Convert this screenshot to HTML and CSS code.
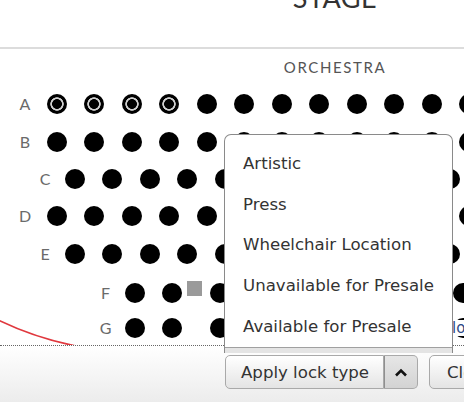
FILE: index.html
```html
<!DOCTYPE html>
<html>
<head>
<meta charset="utf-8">
<link rel="stylesheet" href="styles.css">
</head>
<body>
<div class="page">
  <div class="stage"><div class="stage-title">STAGE</div></div>
  <div class="map">
    <div class="section-title">ORCHESTRA</div>
    <div class="row row-wide">
      <span class="lbl">A</span>
      <div class="seats">
        <i class="seat ring"></i><i class="seat ring"></i><i class="seat ring"></i><i class="seat ring"></i>
        <i class="seat"></i><i class="seat"></i><i class="seat"></i><i class="seat"></i>
        <i class="seat"></i><i class="seat"></i><i class="seat"></i><i class="seat"></i>
      </div>
    </div>
    <div class="row row-wide">
      <span class="lbl">B</span>
      <div class="seats">
        <i class="seat"></i><i class="seat"></i><i class="seat"></i><i class="seat"></i>
        <i class="seat"></i><i class="seat"></i><i class="seat"></i><i class="seat"></i>
        <i class="seat"></i><i class="seat"></i><i class="seat"></i><i class="seat"></i>
      </div>
    </div>
    <div class="row row-mid">
      <span class="lbl">C</span>
      <div class="seats">
        <i class="seat"></i><i class="seat"></i><i class="seat"></i><i class="seat"></i>
        <i class="seat"></i><i class="seat"></i><i class="seat"></i><i class="seat"></i>
        <i class="seat"></i><i class="seat"></i><i class="seat"></i>
      </div>
    </div>
    <div class="row row-wide">
      <span class="lbl">D</span>
      <div class="seats">
        <i class="seat"></i><i class="seat"></i><i class="seat"></i><i class="seat"></i>
        <i class="seat"></i><i class="seat"></i><i class="seat"></i><i class="seat"></i>
        <i class="seat"></i><i class="seat"></i><i class="seat"></i><i class="seat"></i>
      </div>
    </div>
    <div class="row row-mid">
      <span class="lbl">E</span>
      <div class="seats">
        <i class="seat"></i><i class="seat"></i><i class="seat"></i><i class="seat"></i>
        <i class="seat"></i><i class="seat"></i><i class="seat"></i><i class="seat"></i>
        <i class="seat"></i><i class="seat"></i><i class="seat"></i>
      </div>
    </div>
    <div class="row row-narrow row-f">
      <span class="lbl">F</span>
      <div class="seats seats-free">
        <i class="seat"></i><i class="seat gap-17"></i><i class="square gap-5"></i><i class="seat gap-8"></i><i class="seat gap-far"></i>
      </div>
    </div>
    <div class="row row-narrow row-g">
      <span class="lbl">G</span>
      <div class="seats seats-free">
        <i class="seat"></i><i class="seat gap-17"></i><i class="seat gap-28"></i><i class="seat gap-far tagged"><span class="tag">lo</span></i>
      </div>
    </div>
    <svg class="curve" width="100" height="40" viewBox="0 0 100 40">
      <path d="M-2 14 Q35 32 76 40" fill="none" stroke="#e0383e" stroke-width="1.6"/>
    </svg>
  </div>
  <div class="toolbar">
    <div class="split">
      <button class="btn btn-main">Apply lock type</button>
      <button class="btn btn-arrow">
        <svg width="14" height="9" viewBox="0 0 14 9"><polyline points="2,7.5 7,2.5 12,7.5" fill="none" stroke="#111" stroke-width="2.6"/></svg>
      </button>
    </div>
    <button class="btn btn-clear">Clear</button>
  </div>
  <div class="menu">
    <ul class="menu-list">
      <li>Artistic</li>
      <li>Press</li>
      <li>Wheelchair Location</li>
      <li>Unavailable for Presale</li>
      <li>Available for Presale</li>
    </ul>
    <div class="menu-foot"></div>
  </div>
</div>
</body>
</html>
```

FILE: styles.css
```css
html, body {
  margin: 0;
  padding: 0;
  background: #fff;
  overflow: hidden;
}

.page {
  position: relative;
  width: 464px;
  height: 402px;
  overflow: hidden;
  font-family: "DejaVu Sans", Verdana, sans-serif;
}

.stage {
  display: flow-root;
  width: 670px;
  height: 47px;
  border-bottom: 2px solid #dcdcdc;
  text-align: center;
}

.stage-title {
  font-family: Lato, "Liberation Sans", sans-serif;
  font-size: 27px;
  line-height: 27px;
  margin-top: -16px;
  letter-spacing: 0.5px;
  color: #333;
}

.map {
  position: relative;
  width: 670px;
  height: 296px;
  border-bottom: 1px dotted #666;
  overflow: hidden;
}

.section-title {
  height: 36.8px;
  line-height: 36px;
  text-align: center;
  font-family: Lato, "Liberation Sans", sans-serif;
  font-size: 15px;
  letter-spacing: 1.6px;
  color: #555;
}

.row {
  display: flex;
  align-items: center;
  height: 37.3px;
}

.lbl {
  width: 20px;
  text-align: center;
  font-family: Lato, "Liberation Sans", sans-serif;
  font-size: 16px;
  line-height: 1;
  color: #6a6a6a;
}

.row-wide { padding-left: 15px; }
.row-wide .lbl { margin-right: 11.7px; }
.row-mid { padding-left: 35px; }
.row-mid .lbl { margin-right: 9.5px; }
.row-narrow { padding-left: 95.5px; }
.row-narrow .lbl { margin-right: 9.5px; }

.row-f {
  margin-top: 2px;
  margin-bottom: -2px;
}

.seats {
  display: flex;
  align-items: center;
  gap: 17.5px;
}

.seats-free { gap: 0; }

.seat {
  flex: none;
  width: 20px;
  height: 20px;
  border-radius: 50%;
  background: #000;
}

.seat.ring {
  background: radial-gradient(circle at center, #000 0 4.6px, #d0d0d0 5.2px 6.4px, #000 7px);
}

.square {
  flex: none;
  width: 15px;
  height: 15px;
  background: #9a9a9a;
  margin-bottom: 9px;
}

.gap-17 { margin-left: 17px; }
.gap-5 { margin-left: 5px; }
.gap-8 { margin-left: 8px; }
.gap-28 { margin-left: 28px; }
.gap-far { margin-left: 223px; }

.tagged { position: relative; }
.tag {
  position: absolute;
  left: -1px;
  top: 2px;
  font-size: 15px;
  font-style: normal;
  color: #2d4a86;
  background: #fff;
  line-height: 16px;
}

.curve {
  position: absolute;
  left: 0;
  bottom: -1px;
}

.toolbar {
  height: 56px;
  box-sizing: border-box;
  padding: 9px 0 0 225px;
  display: flex;
  align-items: flex-start;
  gap: 11px;
  background: linear-gradient(#ffffff, #ececec);
}

.split { display: flex; }

.btn {
  height: 34px;
  box-sizing: border-box;
  margin: 0;
  border: 1px solid #a9a9a9;
  font-family: "DejaVu Sans", Verdana, sans-serif;
  font-size: 16.6px;
  color: #333;
  background: linear-gradient(#ffffff, #e4e4e4);
  display: flex;
  align-items: center;
  flex: none;
}

.btn-main {
  width: 159px;
  padding: 0 0 0 15px;
  border-radius: 5px 0 0 5px;
}

.btn-arrow {
  width: 34px;
  justify-content: center;
  padding: 0;
  border-left: 1px solid #8f8f8f;
  border-radius: 0 5px 5px 0;
  background: linear-gradient(#e6e6e6, #d3d3d3);
}

.btn-clear {
  width: 80px;
  padding: 0 0 0 17px;
  border-radius: 5px;
}

.menu {
  position: absolute;
  left: 224px;
  top: 134px;
  width: 229px;
  box-sizing: border-box;
  border: 1px solid #8a8a8a;
  border-bottom: none;
  border-radius: 7px 7px 0 0;
  background: #fff;
  padding-top: 9.2px;
}

.menu-list {
  list-style: none;
  margin: 0;
  padding: 0;
}

.menu-list li {
  height: 40.6px;
  line-height: 40.6px;
  padding-left: 18px;
  font-size: 16.6px;
  color: #333;
  white-space: nowrap;
}

.menu-foot {
  height: 5px;
  border-top: 1px solid #a0a0a0;
  background: #e4e4e4;
}
```
